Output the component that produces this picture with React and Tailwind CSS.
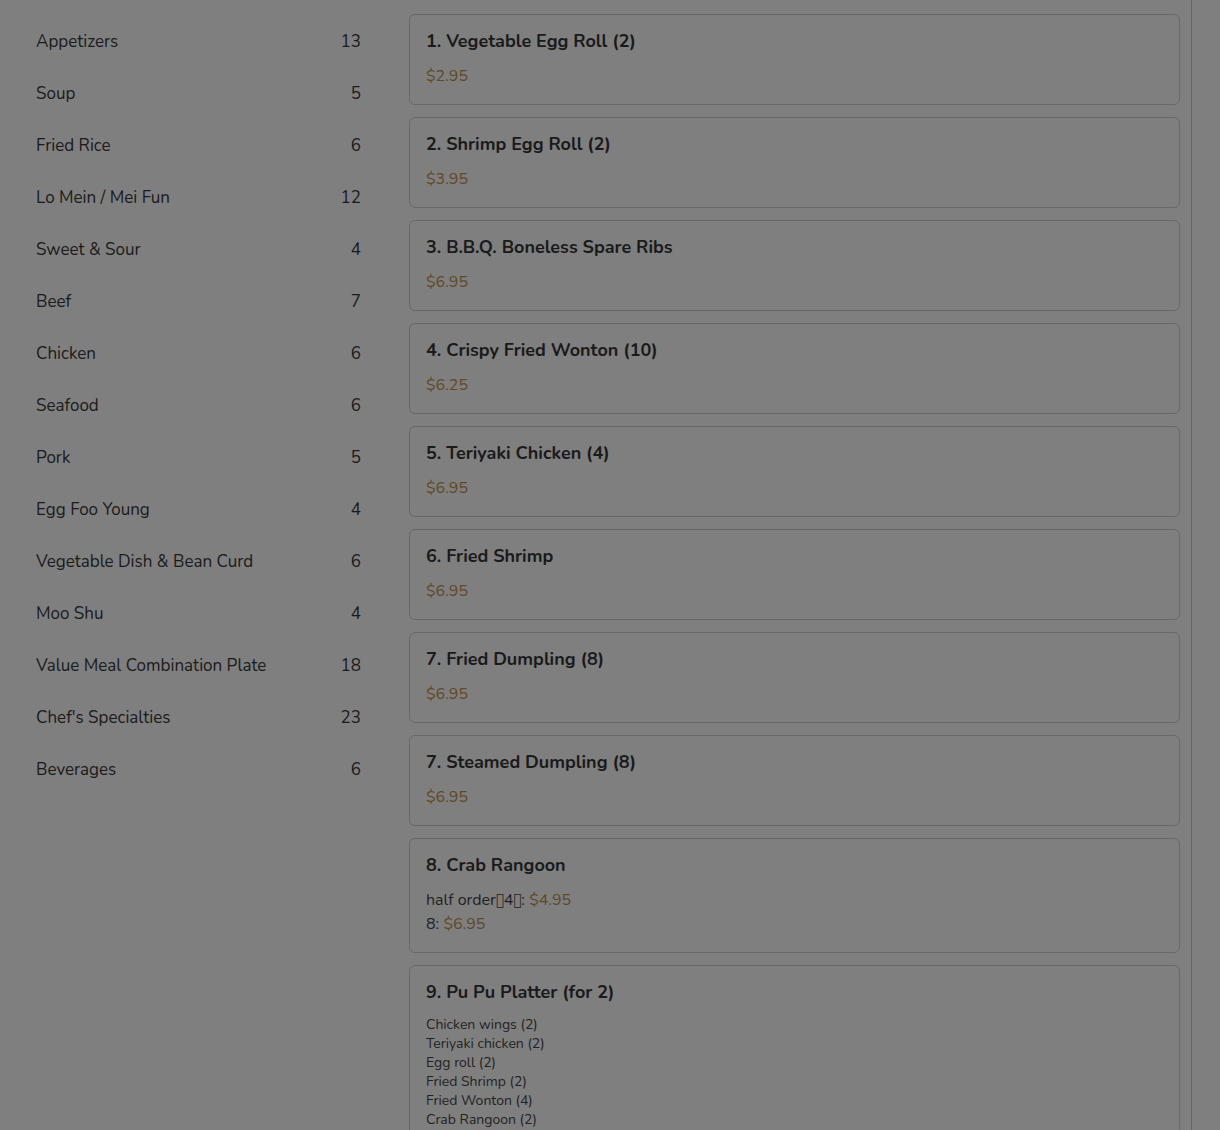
import React from 'react'

const categories = [
  ['Appetizers', 13],
  ['Soup', 5],
  ['Fried Rice', 6],
  ['Lo Mein / Mei Fun', 12],
  ['Sweet & Sour', 4],
  ['Beef', 7],
  ['Chicken', 6],
  ['Seafood', 6],
  ['Pork', 5],
  ['Egg Foo Young', 4],
  ['Vegetable Dish & Bean Curd', 6],
  ['Moo Shu', 4],
  ['Value Meal Combination Plate', 18],
  ["Chef's Specialties", 23],
  ['Beverages', 6],
]

const items = [
  { name: '1. Vegetable Egg Roll (2)', price: '$2.95' },
  { name: '2. Shrimp Egg Roll (2)', price: '$3.95' },
  { name: '3. B.B.Q. Boneless Spare Ribs', price: '$6.95' },
  { name: '4. Crispy Fried Wonton (10)', price: '$6.25' },
  { name: '5. Teriyaki Chicken (4)', price: '$6.95' },
  { name: '6. Fried Shrimp', price: '$6.95' },
  { name: '7. Fried Dumpling (8)', price: '$6.95' },
  { name: '7. Steamed Dumpling (8)', price: '$6.95' },
  {
    name: '8. Crab Rangoon',
    options: [
      ['half order\uE0004\uE000', '$4.95'],
      ['8', '$6.95'],
    ],
  },
  {
    name: '9. Pu Pu Platter (for 2)',
    list: [
      'Chicken wings (2)',
      'Teriyaki chicken (2)',
      'Egg roll (2)',
      'Fried Shrimp (2)',
      'Fried Wonton (4)',
      'Crab Rangoon (2)',
    ],
  },
]

function MenuCard({ item }) {
  return (
    <div className="rounded-md border border-[#686868] p-4">
      <h3 className="text-[18px] font-bold leading-5 text-[#1a1a1a]">{item.name}</h3>
      {item.price && (
        <div className="mt-[13px] text-[16px] leading-6 text-[#5f4826]">{item.price}</div>
      )}
      {item.options && (
        <div className="mt-[13px] text-[16px] leading-6 text-[#1f1f1f]">
          {item.options.map(([label, price]) => (
            <div key={label}>
              {label}: <span className="text-[#5f4826]">{price}</span>
            </div>
          ))}
        </div>
      )}
      {item.list && (
        <div className="mt-[13px] text-[14px] leading-[19px] text-[#222]">
          {item.list.map((line) => (
            <div key={line}>{line}</div>
          ))}
        </div>
      )}
    </div>
  )
}

export default function App() {
  return (
    <div
      className="flex h-[1130px] overflow-hidden bg-[#7f7f7f]"
      style={{ fontFamily: 'Nunito, Lato, "Noto Sans", sans-serif' }}
    >
      <aside className="w-[385px] shrink-0 pt-4 pl-9 pr-6">
        {categories.map(([name, count]) => (
          <div
            key={name}
            className="flex h-[52px] items-center justify-between text-[17px] text-[#1a1a1a]"
          >
            <span>{name}</span>
            <span>{count}</span>
          </div>
        ))}
      </aside>
      <main className="flex w-[807px] shrink-0 flex-col gap-3 border-r border-[#666] pt-[14px] pl-6 pr-[11px]">
        {items.map((item) => (
          <MenuCard key={item.name} item={item} />
        ))}
      </main>
    </div>
  )
}
